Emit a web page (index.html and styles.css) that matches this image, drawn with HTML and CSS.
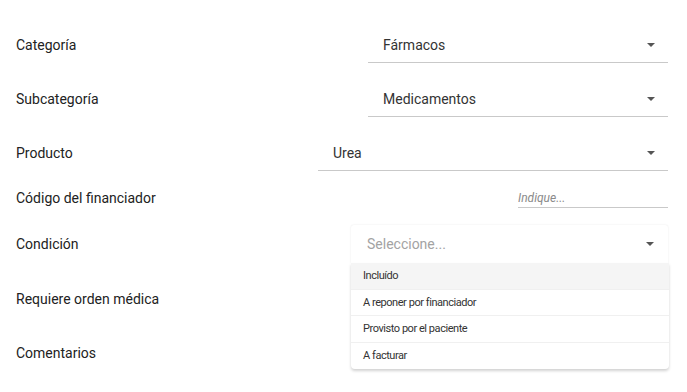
FILE: index.html
```html
<!DOCTYPE html>
<html lang="es">
<head>
  <meta charset="UTF-8" />
  <meta name="viewport" content="width=device-width, initial-scale=1.0" />
  <title>Producto</title>
  <link rel="stylesheet" href="styles.css">
</head>
<body>
  <form class="form">
    <div class="row row-select">
      <label class="label">Categoría</label>
      <div class="select select-md">
        <span class="value">Fármacos</span>
        <span class="caret"></span>
      </div>
    </div>
    <div class="row row-select">
      <label class="label">Subcategoría</label>
      <div class="select select-md">
        <span class="value">Medicamentos</span>
        <span class="caret"></span>
      </div>
    </div>
    <div class="row row-select">
      <label class="label">Producto</label>
      <div class="select select-lg">
        <span class="value">Urea</span>
        <span class="caret"></span>
      </div>
    </div>
    <div class="row row-input">
      <label class="label">Código del financiador</label>
      <input class="text-input" type="text" placeholder="Indique...">
    </div>
    <div class="row row-open">
      <label class="label">Condición</label>
      <div class="dropdown">
        <div class="dropdown-head">
          <span class="placeholder">Seleccione...</span>
          <span class="caret"></span>
        </div>
        <ul class="menu">
          <li class="active">Incluído</li>
          <li>A reponer por financiador</li>
          <li>Provisto por el paciente</li>
          <li>A facturar</li>
        </ul>
      </div>
    </div>
    <div class="row row-select">
      <label class="label">Requiere orden médica</label>
    </div>
    <div class="row row-select">
      <label class="label">Comentarios</label>
    </div>
  </form>
</body>
</html>
```

FILE: styles.css
```css
* { box-sizing: border-box; }
body {
  margin: 0;
  background: #fff;
  font-family: 'Roboto', 'Liberation Sans', sans-serif;
  color: #222;
}
.form {
  padding: 27px 19px 0 16px;
}
.row {
  display: flex;
  align-items: center;
  justify-content: space-between;
}
.row-select { height: 36px; margin-bottom: 18px; }
.row-input { height: 20px; margin-top: -1px; margin-bottom: 17px; }
.row-open { height: 38px; margin-bottom: 18px; }
.label {
  font-size: 14px;
  color: #222;
}
.select {
  height: 36px;
  display: flex;
  align-items: center;
  justify-content: space-between;
  padding: 0 13px 0 15px;
  border-bottom: 1px solid #c9c9c9;
  font-size: 14px;
  color: #333;
}
.select-md { width: 300px; }
.select-lg { width: 350px; }
.caret {
  width: 0;
  height: 0;
  border-left: 4px solid transparent;
  border-right: 4px solid transparent;
  border-top: 4px solid #555;
}
.text-input {
  width: 150px;
  height: 20px;
  border: none;
  border-bottom: 1px solid #c9c9c9;
  padding: 0;
  font-family: inherit;
  font-size: 12px;
  outline: none;
}
.text-input::placeholder {
  color: #8a8a8a;
  font-style: italic;
}
.dropdown {
  position: relative;
  width: 317px;
  height: 38px;
  background: #fff;
  border-radius: 3px 3px 0 0;
  box-shadow: 0 0 2px rgba(0,0,0,0.1);
}
.dropdown-head {
  height: 38px;
  display: flex;
  align-items: center;
  justify-content: space-between;
  padding: 0 14px 0 16px;
  font-size: 14px;
}
.placeholder { color: #a3a3a3; }
.menu {
  position: absolute;
  top: 38px;
  left: 0;
  width: 318px;
  margin: 0;
  padding: 0;
  list-style: none;
  background: #fff;
  border-radius: 0 0 4px 4px;
  box-shadow: 0 2px 3px rgba(0,0,0,0.18);
  z-index: 10;
}
.menu li {
  height: 26.5px;
  display: flex;
  align-items: center;
  padding: 0 12px;
  font-size: 11px;
  letter-spacing: -0.45px;
  color: #333;
  border-bottom: 1px solid #f0f0f0;
}
.menu li:last-child { border-bottom: none; }
.menu li.active { background: #f5f5f5; }
```
